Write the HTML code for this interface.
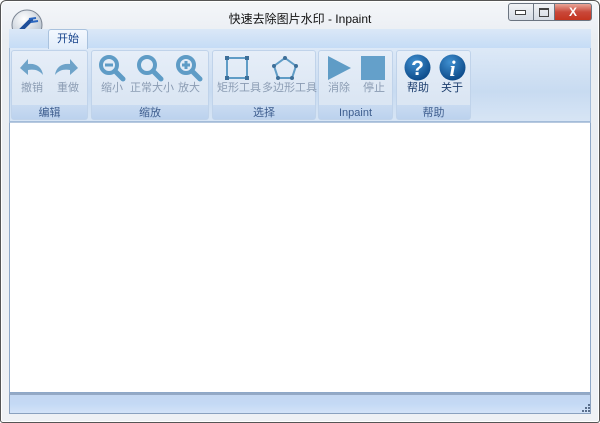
<!DOCTYPE html>
<html><head><meta charset="utf-8"><style>
*{margin:0;padding:0;box-sizing:border-box}
body{width:600px;height:423px;background:#fff;position:relative;overflow:hidden;font-family:"Liberation Sans","Noto Sans CJK SC",sans-serif;font-size:11px}
.abs{position:absolute}
.frame{left:0;top:0;width:600px;height:423px;border:1px solid #555;border-radius:6px 6px 3px 3px;background:linear-gradient(#f4f6f9,#e9edf2 40px,#eef1f5);box-shadow:inset 0 0 0 1px #fff}
.title{left:0;top:10px;width:600px;text-align:center;font-size:12px;color:#111}
.tabrow{left:9px;top:29px;width:582px;height:19px;background:linear-gradient(#dbe8f7,#c5dcf6)}
.tab{left:48px;top:29px;width:40px;height:20px;background:linear-gradient(#f3f8fe,#e2edfa);border:1px solid #a9c2de;border-bottom:none;border-radius:3px 3px 0 0;text-align:center;line-height:18px;color:#15428b}
.ribbon{left:9px;top:48px;width:582px;height:74px;background:linear-gradient(#dde9f7,#c8dbf1 60%,#d7e5f5);border:1px solid #a3bcd9;border-top:none}
.grp{top:50px;height:70px;border:1px solid #c0d3ea;border-radius:3px;background:linear-gradient(#e6eef8,#dbe6f3 70%);}
.glab{position:absolute;left:0;right:0;bottom:0;height:14px;background:linear-gradient(#c9dbf1,#bcd2ee);text-align:center;line-height:16px;color:#3d5d8e;font-size:11px}
.btn{position:absolute;top:31px;font-size:11px;line-height:13px;color:#8b9cb3;white-space:nowrap}
.btn.d{color:#1d3e6e}
.content{left:9px;top:122px;width:582px;height:271px;background:#fff;border:1px solid #8ea8c8;border-top:1px solid #b7c9df}
.status{left:9px;top:393px;width:582px;height:21px;background:linear-gradient(#c3d7f1,#c4d9f5 50%,#d3e3f8);border:1px solid #8aa1bf;border-top:2px solid #94a9c5}
.cap{top:3px;height:18px;border:1px solid #6b7480;background:linear-gradient(#f1f3f6,#d5dbe3)}
</style></head><body>
<div class="abs frame"></div>
<div class="abs title">快速去除图片水印 - Inpaint</div>
<div class="abs cap" style="left:508px;width:26px;border-radius:3px 0 0 3px"></div>
<div class="abs cap" style="left:533px;width:22px"></div>
<div class="abs cap" style="left:554px;width:38px;border-radius:0 3px 3px 0;background:linear-gradient(#e9a597,#c9483a 50%,#c4341f)"></div>
<div class="abs" style="left:515px;top:10px;width:11px;height:5px;border:1px solid #444;background:#fff"></div>
<div class="abs" style="left:539px;top:8px;width:10px;height:9px;border:1px solid #444;border-top-width:2px"></div>
<div class="abs" style="left:554px;top:5px;width:38px;text-align:center;color:#fff;font-weight:bold;font-size:12px">X</div>
<svg class="abs" style="left:11px;top:9px" width="32" height="32" viewBox="0 0 32 32">
<defs><radialGradient id="lg" cx="40%" cy="30%" r="70%"><stop offset="0" stop-color="#fff"/><stop offset="1" stop-color="#b8c3cf"/></radialGradient></defs>
<circle cx="16" cy="16" r="15" fill="url(#lg)" stroke="#7b8593"/>
<path d="M7 24 L20 11" stroke="#1f4f9a" stroke-width="4" stroke-linecap="round"/>
<path d="M18 10 L25 9 M20 13 L27 12" stroke="#2a66c0" stroke-width="2"/>
</svg>
<div class="abs tabrow"></div>
<div class="abs ribbon"></div>
<div class="abs tab">开始</div>

<div class="abs grp" style="left:11px;width:77px">
<svg class="abs" style="left:6px;top:5px" width="26" height="22" viewBox="0 0 26 22"><path d="M2 12 L10 3 L10 8 C18 7 24 11 25 19 C21 14 16 13 10 14 L10 19 Z" fill="#6ea3c9"/></svg>
<svg class="abs" style="left:42px;top:5px" width="26" height="22" viewBox="0 0 26 22"><path d="M24 12 L16 3 L16 8 C8 7 2 11 1 19 C5 14 10 13 16 14 L16 19 Z" fill="#6ea3c9"/></svg>
<div class="btn" style="left:9px">撤销</div><div class="btn" style="left:45px">重做</div>
<div class="glab">编辑</div></div>

<div class="abs grp" style="left:91px;width:118px">
<svg class="abs" style="left:6px;top:3px" width="28" height="28" viewBox="0 0 28 28"><circle cx="11" cy="11" r="8" fill="none" stroke="#5f9cc6" stroke-width="4"/><path d="M17 17 L25 25" stroke="#5f9cc6" stroke-width="5" stroke-linecap="round"/><path d="M7 11 H15" stroke="#5f9cc6" stroke-width="3"/></svg>
<svg class="abs" style="left:44px;top:3px" width="28" height="28" viewBox="0 0 28 28"><circle cx="11" cy="11" r="8" fill="none" stroke="#5f9cc6" stroke-width="4"/><path d="M17 17 L25 25" stroke="#5f9cc6" stroke-width="5" stroke-linecap="round"/></svg>
<svg class="abs" style="left:83px;top:3px" width="28" height="28" viewBox="0 0 28 28"><circle cx="11" cy="11" r="8" fill="none" stroke="#5f9cc6" stroke-width="4"/><path d="M17 17 L25 25" stroke="#5f9cc6" stroke-width="5" stroke-linecap="round"/><path d="M7 11 H15 M11 7 V15" stroke="#5f9cc6" stroke-width="3"/></svg>
<div class="btn" style="left:9px">缩小</div><div class="btn" style="left:38px">正常大小</div><div class="btn" style="left:86px">放大</div>
<div class="glab">缩放</div></div>

<div class="abs grp" style="left:212px;width:104px">
<svg class="abs" style="left:11px;top:4px" width="26" height="26" viewBox="0 0 26 26"><rect x="3" y="3" width="20" height="20" fill="none" stroke="#5f9cc6" stroke-width="2"/><g fill="#3d6f99"><rect x="1" y="1" width="4" height="4"/><rect x="21" y="1" width="4" height="4"/><rect x="1" y="21" width="4" height="4"/><rect x="21" y="21" width="4" height="4"/></g></svg>
<svg class="abs" style="left:58px;top:4px" width="28" height="26" viewBox="0 0 28 26"><path d="M14 3 L25 11 L21 23 L7 23 L3 11 Z" fill="none" stroke="#5f9cc6" stroke-width="2"/><g fill="#3d6f99"><circle cx="14" cy="3" r="2"/><circle cx="25" cy="11" r="2"/><circle cx="21" cy="23" r="2"/><circle cx="7" cy="23" r="2"/><circle cx="3" cy="11" r="2"/></g></svg>
<div class="btn" style="left:4px">矩形工具</div><div class="btn" style="left:49px">多边形工具</div>
<div class="glab">选择</div></div>

<div class="abs grp" style="left:318px;width:75px">
<svg class="abs" style="left:7px;top:4px" width="26" height="26" viewBox="0 0 26 26"><path d="M2 1 L25 13 L2 25 Z" fill="#5f9cc6"/></svg>
<div class="abs" style="left:42px;top:5px;width:24px;height:24px;background:#64a0ca"></div>
<div class="btn" style="left:9px">消除</div><div class="btn" style="left:44px">停止</div>
<div class="glab">Inpaint</div></div>

<div class="abs grp" style="left:396px;width:75px">
<svg class="abs" style="left:7px;top:3px" width="27" height="27" viewBox="0 0 27 27"><defs><radialGradient id="hb" cx="40%" cy="30%" r="70%"><stop offset="0" stop-color="#3f8fd0"/><stop offset="1" stop-color="#0d4b8a"/></radialGradient></defs><circle cx="13.5" cy="13.5" r="13" fill="url(#hb)"/><text x="13.5" y="21" text-anchor="middle" font-family="Liberation Sans" font-weight="bold" font-size="21" fill="#fff">?</text></svg>
<svg class="abs" style="left:42px;top:3px" width="27" height="27" viewBox="0 0 27 27"><circle cx="13.5" cy="13.5" r="13" fill="url(#hb)"/><text x="13.5" y="22" text-anchor="middle" font-family="Liberation Serif" font-style="italic" font-weight="bold" font-size="22" fill="#fff">i</text></svg>
<div class="btn d" style="left:10px">帮助</div><div class="btn d" style="left:44px">关于</div>
<div class="glab">帮助</div></div>

<div class="abs content"></div>
<div class="abs status"></div>
<svg class="abs" style="left:581px;top:403px" width="9" height="9" viewBox="0 0 9 9"><g fill="#5a6f8c"><rect x="7" y="1" width="2" height="2"/><rect x="4" y="4" width="2" height="2"/><rect x="7" y="4" width="2" height="2"/><rect x="1" y="7" width="2" height="2"/><rect x="4" y="7" width="2" height="2"/><rect x="7" y="7" width="2" height="2"/></g></svg>
</body></html>
